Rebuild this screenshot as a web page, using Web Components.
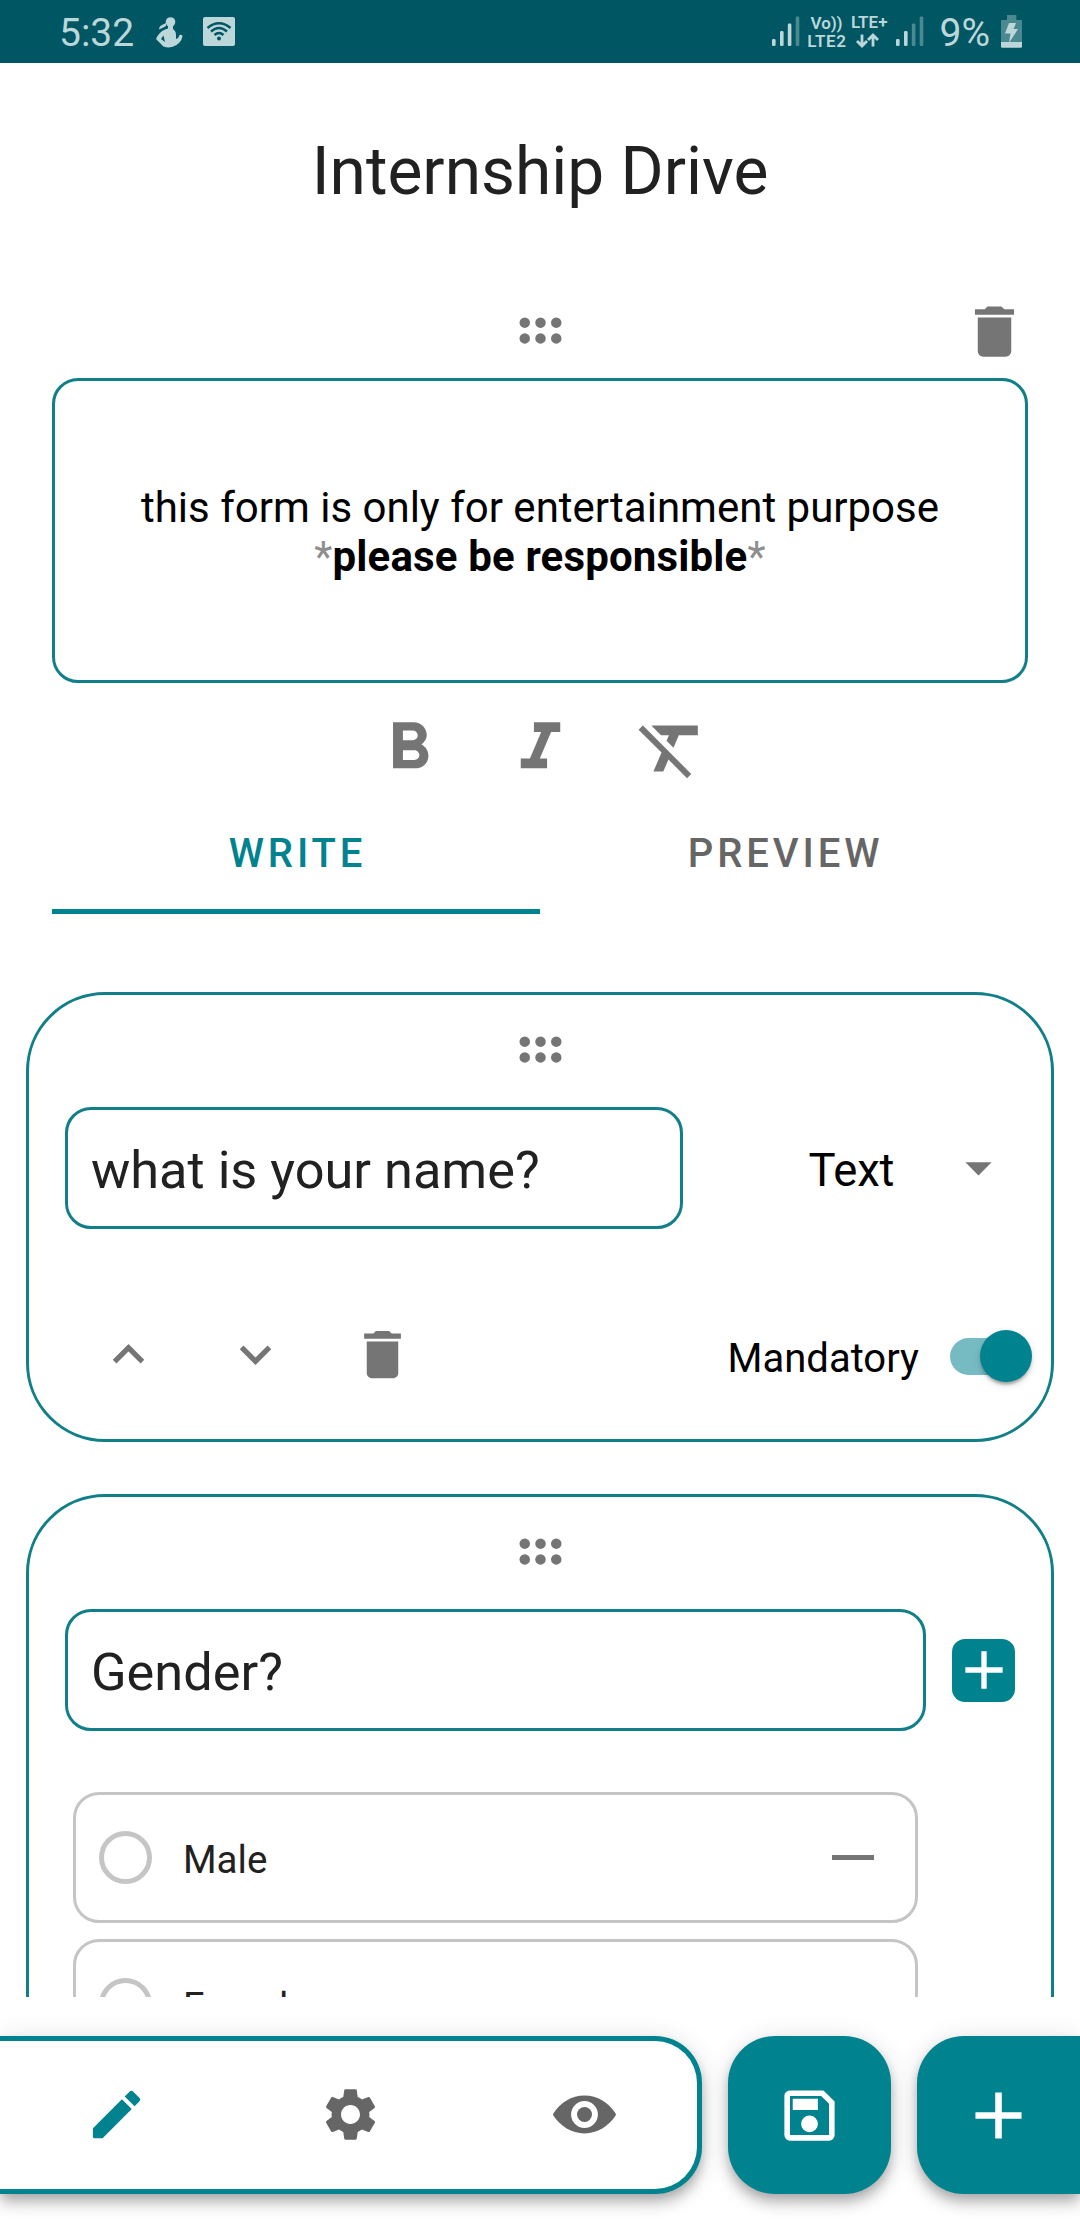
<!DOCTYPE html>
<html lang="en">
<head>
<meta charset="utf-8">
<title>Internship Drive</title>
<style>
  html, body { margin: 0; padding: 0; background: #fff; }
  body { width: 1080px; height: 2220px; overflow: hidden; font-family: Roboto, sans-serif; color: #212121; }
</style>
</head>
<body>
<form-app></form-app>
<script>
const make = (name, html) => {
  const template = document.createElement('template');
  template.innerHTML = html;
  customElements.define(name, class extends HTMLElement {
    constructor() {
      super();
      this.attachShadow({ mode: 'open' }).append(template.content.cloneNode(true));
    }
  });
};

const ICONS = {
  drag: '<circle cx="6" cy="9" r="2"/><circle cx="12" cy="9" r="2"/><circle cx="18" cy="9" r="2"/><circle cx="6" cy="15" r="2"/><circle cx="12" cy="15" r="2"/><circle cx="18" cy="15" r="2"/>',
  trash: '<path d="M6 19c0 1.100.9 2 2 2h8c1.100 0 2-.9 2-2V7H6v12zM19 4h-3.500l-1-1h-5l-1 1H5v2h14V4z"/>',
  up: '<path d="M7.410 15.410L12 10.830l4.590 4.580L18 14l-6-6-6 6z"/>',
  down: '<path d="M7.410 8.590L12 13.170l4.590-4.580L18 10l-6 6-6-6z"/>',
  caret: '<path d="M7 10l5 5 5-5z"/>',
  plus: '<path d="M19 13h-6v6h-2v-6H5v-2h6V5h2v6h6z"/>',
  bold: '<path d="M15.600 10.790c.97-.67 1.650-1.770 1.650-2.790 0-2.260-1.750-4-4-4H7v14h7.040c2.090 0 3.710-1.700 3.710-3.790 0-1.520-.86-2.820-2.150-3.420zM10 6.500h3c.83 0 1.500.67 1.500 1.500s-.67 1.500-1.500 1.500h-3v-3zm3.500 9H10v-3h3.500c.83 0 1.500.67 1.500 1.500s-.67 1.500-1.500 1.500z"/>',
  italic: '<path d="M10 4v3h2.210l-3.420 8H6v3h8v-3h-2.210l3.420-8H18V4z"/>',
  clear: '<path d="M3.270 5L2 6.270l6.970 6.970L6.500 19h3l1.570-3.660L16.730 21 18 19.730 3.550 5.270 3.270 5zM6 5v.18L8.820 8h2.400l-.72 1.680 2.100 2.100L14.210 8H20V5H6z"/>',
  pencil: '<path d="M3 17.460v3.040c0 .28.22.5.5.5h3.040c.13 0 .26-.05.35-.15L17.810 9.940l-3.750-3.750L3.150 17.100c-.1.1-.15.22-.15.36zM20.710 7.040c.39-.39.39-1.020 0-1.410l-2.340-2.340c-.39-.39-1.020-.39-1.410 0l-1.830 1.830 3.750 3.750 1.830-1.830z"/>',
  gear: '<path d="M19.140 12.940c.04-.3.06-.61.06-.94 0-.32-.02-.64-.07-.94l2.030-1.580c.18-.14.23-.41.12-.61l-1.920-3.320c-.12-.22-.37-.29-.59-.22l-2.390.96c-.5-.38-1.030-.7-1.620-.94l-.36-2.540c-.04-.24-.24-.41-.48-.41h-3.840c-.24 0-.43.17-.47.41l-.36 2.540c-.59.24-1.130.57-1.620.94l-2.390-.96c-.22-.08-.47 0-.59.22L2.740 8.870c-.12.21-.08.47.12.61l2.030 1.580c-.05.3-.09.63-.09.94s.02.64.07.94l-2.030 1.580c-.18.14-.23.41-.12.61l1.920 3.320c.12.22.37.29.59.22l2.390-.96c.5.38 1.030.7 1.620.94l.36 2.540c.05.24.24.41.48.41h3.840c.24 0 .44-.17.47-.41l.36-2.540c.59-.24 1.130-.56 1.620-.94l2.390.96c.22.08.47 0 .59-.22l1.920-3.320c.12-.22.07-.47-.12-.61l-2.010-1.580zM12 15.600c-1.980 0-3.600-1.620-3.600-3.600s1.620-3.600 3.600-3.600 3.600 1.620 3.600 3.600-1.620 3.600-3.600 3.600z"/>',
  eye: '<path fill-rule="evenodd" d="M.2 11.500C2.800 7.600 7 4.800 12 4.800s9.200 2.800 11.800 6.700q.3.500 0 1C21.200 16.400 17 19.200 12 19.200S2.800 16.400.2 12.500q-.3-.5 0-1zM12 6.900a5.100 5.100 0 1 0 0 10.200 5.100 5.100 0 0 0 0-10.200z"/><circle cx="12" cy="12" r="2.850"/>',
  save: '<path fill-rule="evenodd" d="M17 3H5a2 2 0 0 0-2 2v14a2 2 0 0 0 2 2h14a2 2 0 0 0 2-2V7l-4-4zm2 16H5V5h11.170L19 7.830V19zM12 12a3 3 0 1 0 0 6 3 3 0 0 0 0-6zM6 6h9v4H6z"/>'
};

customElements.define('ui-icon', class extends HTMLElement {
  constructor() { super(); this.attachShadow({ mode: 'open' }); }
  connectedCallback() {
    const size = this.getAttribute('size') || 63;
    this.shadowRoot.innerHTML = `<style>:host{display:block;flex:none}svg{display:block;fill:currentColor}</style>
      <svg width="${size}" height="${size}" viewBox="0 0 24 24">${ICONS[this.getAttribute('name')]}</svg>`;
  }
});

make('status-bar', `
<style>
  :host { display: flex; height: 63px; background: #005662; color: #bcd7da; font-size: 39px; line-height: 46px; box-sizing: border-box; padding: 10px 58px 0 59px; justify-content: space-between; align-items: flex-start; }
  div { display: flex; align-items: flex-start; }
  svg { display: block; fill: currentColor; flex: none; }
  .net { flex-direction: column; font-size: 17px; font-weight: 600; line-height: 18px; align-items: center; }
  .vo { letter-spacing: -.1px; }
  .lte { letter-spacing: .6px; margin-right: -.6px; }
</style>
<div>
  <span style="width:97px">5:32</span>
  <svg width="27" height="31" viewBox="0 0 27 31" style="margin-top:7px">
    <circle cx="14.500" cy="5" r="4.800"/>
    <path d="M10 6L5 8.500Q3 10 3 12.500Q6 11 10 9z"/>
    <path d="M12 8h5v4q3 2 3 6v4q3-1 3.500-4q2-1 3 1q-1 6-6 9q-6 4-13 1.500L0 22Q3 15 9 12.500l3-1zM7.500 18.500L5 22l4 3z"/>
  </svg>
  <svg width="32" height="29" viewBox="0 0 32 29" style="margin:7px 0 0 20px">
    <rect width="32" height="29" rx="2"/>
    <g fill="none" stroke="#005662" stroke-width="2.400"><path d="M4.500 11Q16 1.500 27.500 11M8 14.500Q16 7.500 24 14.500M11.500 18Q16 14 20.500 18"/></g>
    <circle cx="16" cy="21.500" r="2" fill="#005662"/>
  </svg>
</div>
<div>
  <svg width="28" height="31" viewBox="0 0 28 31" style="margin-top:6px">
    <rect x="0" y="23" width="3.600" height="7" rx="1.300"/><rect x="8" y="15" width="3.600" height="15" rx="1.300"/><rect x="15.800" y="7.600" width="3.600" height="22.400" rx="1.300"/><rect x="23.700" y=".5" width="3.600" height="29.500" rx="1.300" opacity=".4"/>
  </svg>
  <div class="net" style="margin:4px 0 0 7px"><span class="vo">Vo))</span><span class="lte">LTE2</span></div>
  <div class="net" style="margin:3px 0 0 5px"><span>LTE+</span>
    <svg width="23" height="15" viewBox="0 0 23 15" style="margin:2px 3px 0 0"><g fill="none" stroke="currentColor" stroke-width="2.800"><path d="M6 1.500V13M1 8l5 5 5-5M17 13.500V2M12 7l5-5 5 5"/></g></svg>
  </div>
  <svg width="28" height="31" viewBox="0 0 28 31" style="margin:6px 0 0 8px">
    <rect x="0" y="23" width="3.600" height="7" rx="1.300"/><rect x="8" y="15" width="3.600" height="15" rx="1.300"/><rect x="15.800" y="7.600" width="3.600" height="22.400" rx="1.300" opacity=".4"/><rect x="23.700" y=".5" width="3.600" height="29.500" rx="1.300" opacity=".4"/>
  </svg>
  <span style="margin-left:16px">9%</span>
  <svg width="21" height="33" viewBox="0 0 21 33" style="margin:5px 0 0 11px">
    <g fill="#4b8991"><rect x="6" width="9.300" height="6"/><rect y="5" width="21" height="23" rx="1"/></g>
    <path d="M0 27h21v4.500q0 1.300-1.300 1.300H1.300Q0 32.800 0 31.500z"/>
    <path d="M8 8h7l-2.500 6H17L8 28l1.500-9.500H4z"/>
  </svg>
</div>`);

make('drag-handle', `
<style>:host{display:flex;justify-content:center;align-items:center;color:#757575}</style>
<ui-icon name="drag"></ui-icon>`);

make('description-editor', `
<style>
  :host { display: block; padding: 0 52px; }
  .head { display: grid; grid-template-columns: 1fr auto 1fr; height: 98px; align-items: center; color: #757575; }
  .head drag-handle { grid-column: 2; margin-top: 3px; }
  .head ui-icon { justify-self: end; margin-top: 5px; }
  .box { box-sizing: border-box; height: 305px; border: 3px solid #117f88; border-radius: 26px; display: flex; flex-direction: column; justify-content: center; text-align: center; font-size: 42px; line-height: 49px; color: #000; padding-top: 3px; }
  .strong { letter-spacing: .16px; }
  i { font-style: normal; color: #8e8e8e; }
  .tools { display: flex; justify-content: center; gap: 52px; margin-top: 26px; color: #757575; }
  .tabs { display: grid; grid-template-columns: 1fr 1fr; height: 126px; font-size: 40px; font-weight: 500; letter-spacing: 3.900px; text-align: center; color: #666; }
  .tabs div { display: flex; align-items: center; justify-content: center; padding: 4px 0 0 3px; box-sizing: border-box; }
  .on { color: #00838f; box-shadow: inset 0 -5px #00838f; }
</style>
<div class="head"><drag-handle></drag-handle><ui-icon name="trash" size="67"></ui-icon></div>
<div class="box"><div>this form is only for entertainment purpose</div><div class="strong"><i>*</i><b>please be responsible</b><i>*</i></div></div>
<div class="tools"><ui-icon name="bold" size="79"></ui-icon><ui-icon name="italic" size="79"></ui-icon><ui-icon name="clear" size="79"></ui-icon></div>
<div class="tabs"><div class="on">WRITE</div><div>PREVIEW</div></div>`);

make('question-card', `
<style>
  :host { display: block; box-sizing: border-box; margin: 0 26px; border: 3px solid #117f88; border-radius: 79px; }
  drag-handle { height: 109px; margin-bottom: 3px; }
  .row { display: flex; align-items: center; height: 122px; padding-left: 36px; }
</style>
<drag-handle></drag-handle>
<div class="row"><slot name="row"></slot></div>
<slot></slot>`);

make('question-field', `
<style>:host{display:flex;align-items:center;box-sizing:border-box;height:122px;border:3px solid #117f88;border-radius:26px;padding:4px 0 0 23px;font-size:52.300px;color:#212121}</style>
<slot></slot>`);

make('type-select', `
<style>
  :host { display: flex; align-items: center; margin-left: auto; margin-right: 41px; color: #000; font-size: 45.500px; letter-spacing: -.2px; }
  span { padding-top: 4px; width: 138.500px; } ui-icon { color: #757575; margin-top: -1px; }
</style>
<span><slot></slot></span><ui-icon name="caret"></ui-icon>`);

make('toggle-switch', `
<style>
  :host { display: grid; width: 82.500px; align-items: center; }
  i, b { grid-area: 1/1; }
  i { width: 76px; height: 37px; border-radius: 19px; background: #77bbc2; }
  b { justify-self: end; width: 52.500px; height: 52.500px; border-radius: 50%; background: #00838f; box-shadow: 0 5px 3px -3px rgba(0,0,0,.2), 0 3px 3px rgba(0,0,0,.14), 0 3px 8px rgba(0,0,0,.12); }
</style><i></i><b></b>`);

make('card-actions', `
<style>
  :host { display: flex; align-items: center; height: 126px; margin-top: 62px; padding: 0 19px 0 36px; color: #757575; }
  .btn { width: 127px; display: flex; justify-content: center; }
  span { margin: 9px 30.500px 0 auto; font-size: 40px; color: #000; }
  toggle-switch { margin-top: 4px; }
</style>
<div class="btn"><ui-icon name="up"></ui-icon></div><div class="btn"><ui-icon name="down"></ui-icon></div><div class="btn"><ui-icon name="trash"></ui-icon></div>
<span><slot></slot></span><toggle-switch></toggle-switch>`);

make('add-option', `
<style>:host{display:flex;align-items:center;justify-content:center;width:63px;height:63px;border-radius:13px;background:#00838f;color:#fff;margin-left:26px}</style>
<ui-icon name="plus" size="64"></ui-icon>`);

make('answer-option', `
<style>
  :host { display: flex; align-items: center; box-sizing: border-box; width: 845px; height: 131px; margin-left: 44px; border: 3px solid #c5c5c5; border-radius: 26px; padding: 0 41px 0 23px; font-size: 38.500px; color: #212121; }
  i { box-sizing: border-box; width: 53px; height: 53px; border: 5.500px solid #c5c5c5; border-radius: 50%; margin-right: 31px; }
  span { padding-top: 4px; }
  b { width: 42.500px; height: 5.500px; background: #757575; margin-left: auto; }
</style>
<i></i><span><slot></slot></span><b></b>`);

make('bottom-bar', `
<style>
  :host { display: flex; gap: 26px; height: 223px; box-sizing: border-box; padding-top: 39px; background: #fff; overflow: hidden; }
  nav, .fab { height: 158px; box-sizing: border-box; box-shadow: 0 5px 10.500px -2.600px rgba(0,0,0,.2), 0 10.500px 13px rgba(0,0,0,.14), 0 2.600px 26px rgba(0,0,0,.12); }
  nav { width: 702px; flex: none; border: 5px solid #00838f; border-left: 0; border-radius: 0 47px 47px 0; background: #fff; color: #666; }
  nav div { width: 701px; height: 147px; display: grid; grid-template-columns: repeat(3, 1fr); place-items: center; }
  .fab { flex: none; width: 163px; border-radius: 47px; background: #00838f; color: #fff; display: flex; align-items: center; justify-content: center; }
  .end { border-radius: 47px 0 0 47px; }
</style>
<nav><div><ui-icon name="pencil" style="color:#00838f"></ui-icon><ui-icon name="gear"></ui-icon><ui-icon name="eye"></ui-icon></div></nav>
<div class="fab"><ui-icon name="save" size="67"></ui-icon></div>
<div class="fab end"><ui-icon name="plus" size="79"></ui-icon></div>`);

make('form-app', `
<style>
  :host { display: flex; flex-direction: column; width: 1080px; height: 2220px; background: #fff; }
  status-bar, bottom-bar { flex: none; }
  main { flex: 1; min-height: 0; overflow: hidden; }
  h1 { margin: 0; height: 217px; display: flex; align-items: center; justify-content: center; font-size: 65.800px; font-weight: 400; }
  .first { margin-top: 78px; height: 450px; }
  .second { margin-top: 52px; height: 900px; }
  .options { display: flex; flex-direction: column; gap: 16px; margin-top: 61px; }
</style>
<status-bar></status-bar>
<main>
  <h1>Internship Drive</h1>
  <description-editor></description-editor>
  <question-card class="first">
    <question-field slot="row" style="width:618px">what is your name?</question-field>
    <type-select slot="row">Text</type-select>
    <card-actions>Mandatory</card-actions>
  </question-card>
  <question-card class="second">
    <question-field slot="row" style="width:861px">Gender?</question-field>
    <add-option slot="row"></add-option>
    <div class="options"><answer-option>Male</answer-option><answer-option>Female</answer-option></div>
  </question-card>
</main>
<bottom-bar></bottom-bar>`);
</script>
</body>
</html>
